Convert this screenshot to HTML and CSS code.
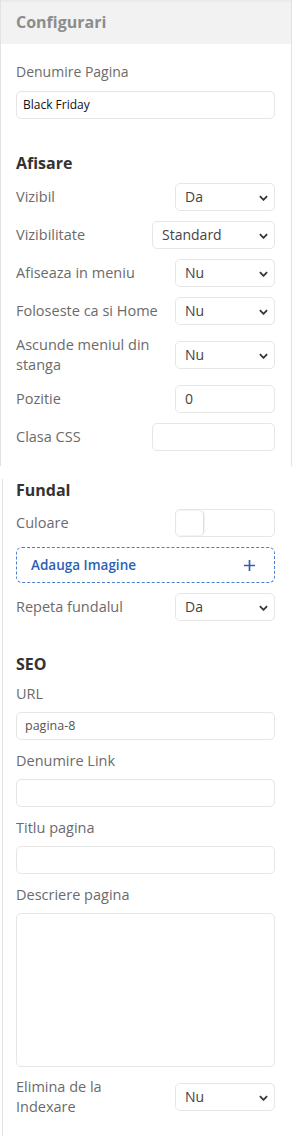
FILE: index.html
```html
<!DOCTYPE html>
<html lang="ro">
<head>
<meta charset="utf-8">
<title>Configurari</title>
<link rel="stylesheet" href="styles.css">
</head>
<body>
<div class="panel panel-top">
  <div class="header">Configurari</div>
  <div class="content">
    <div class="field first">
      <div class="label">Denumire Pagina</div>
      <div class="input dark">Black Friday</div>
    </div>

    <h2 class="heading">Afisare</h2>
    <div class="rows">
      <div class="row">
        <span class="rlabel">Vizibil</span>
        <div class="select">Da<svg class="chev" viewBox="0 0 10 6"><path d="M1 1l4 4 4-4"/></svg></div>
      </div>
      <div class="row">
        <span class="rlabel">Vizibilitate</span>
        <div class="select wide">Standard<svg class="chev" viewBox="0 0 10 6"><path d="M1 1l4 4 4-4"/></svg></div>
      </div>
      <div class="row">
        <span class="rlabel">Afiseaza in meniu</span>
        <div class="select">Nu<svg class="chev" viewBox="0 0 10 6"><path d="M1 1l4 4 4-4"/></svg></div>
      </div>
      <div class="row">
        <span class="rlabel">Foloseste ca si Home</span>
        <div class="select">Nu<svg class="chev" viewBox="0 0 10 6"><path d="M1 1l4 4 4-4"/></svg></div>
      </div>
      <div class="row tall">
        <span class="rlabel two">Ascunde meniul din stanga</span>
        <div class="select">Nu<svg class="chev" viewBox="0 0 10 6"><path d="M1 1l4 4 4-4"/></svg></div>
      </div>
      <div class="row">
        <span class="rlabel">Pozitie</span>
        <div class="select plain">0</div>
      </div>
      <div class="row">
        <span class="rlabel">Clasa CSS</span>
        <div class="select plain wide"></div>
      </div>
    </div>
  </div>
</div>

<div class="panel panel-bottom">
  <div class="content">
    <h2 class="heading top">Fundal</h2>
    <div class="rows">
      <div class="row">
        <span class="rlabel">Culoare</span>
        <div class="select swatch"><span class="knob"></span></div>
      </div>
      <div class="add">
        <span>Adauga Imagine</span>
        <svg class="plus" viewBox="0 0 14 14"><path d="M7 1v12M1 7h12"/></svg>
      </div>
      <div class="row">
        <span class="rlabel">Repeta fundalul</span>
        <div class="select">Da<svg class="chev" viewBox="0 0 10 6"><path d="M1 1l4 4 4-4"/></svg></div>
      </div>
    </div>

    <h2 class="heading seo">SEO</h2>
    <div class="field">
      <div class="label">URL</div>
      <div class="input">pagina-8</div>
    </div>
    <div class="field">
      <div class="label">Denumire Link</div>
      <div class="input"></div>
    </div>
    <div class="field">
      <div class="label">Titlu pagina</div>
      <div class="input"></div>
    </div>
    <div class="field">
      <div class="label">Descriere pagina</div>
      <div class="input textarea"></div>
    </div>
    <div class="row tall last">
      <span class="rlabel two">Elimina de la Indexare</span>
      <div class="select">Nu<svg class="chev" viewBox="0 0 10 6"><path d="M1 1l4 4 4-4"/></svg></div>
    </div>
  </div>
</div>
</body>
</html>
```

FILE: styles.css
```css
* { box-sizing: border-box; }
html, body { margin: 0; padding: 0; background: #fff; }
body {
  width: 293px;
  font-family: "Open Sans", "Noto Sans", sans-serif;
  font-size: 14px;
  color: #6b6b6b;
}
.panel-top {
  width: 292px;
  height: 466px;
  border-left: 1px solid #e2e2e2;
  border-right: 1px solid #e2e2e2;
}
.panel-bottom {
  margin-left: 2px;
  width: 291px;
  height: 670px;
  border-left: 1px solid #e2e2e2;
  padding-bottom: 8px;
}
.header {
  height: 44px;
  line-height: 44px;
  padding-left: 15px;
  background: #f2f2f2;
  box-shadow: inset 0 3px 3px -2px rgba(0,0,0,0.06);
  color: #8c8c8c;
  font-weight: 700;
  font-size: 16px;
}
.panel-top .content { padding: 0 16px 0 15px; }
.panel-bottom .content { padding: 0 18px 0 13px; }
.field { margin-top: 11px; }
.field.first { margin-top: 18px; }
.label {
  line-height: 20px;
  margin-bottom: 8px;
  color: #6b6b6b;
  font-size: 14.5px;
}
.field.first .label { margin-bottom: 9px; font-size: 14px; }
.input {
  height: 28px;
  border: 1px solid #e6e6e6;
  border-radius: 5px;
  padding-left: 8px;
  line-height: 26px;
  font-size: 12.5px;
  color: #555;
}
.input.dark { color: #111; padding-left: 6px; font-size: 12px; }
.input.textarea { height: 154px; }
.heading {
  margin: 33px 0 9px;
  font-size: 16px;
  line-height: 22px;
  font-weight: 700;
  color: #333;
}
.heading.top { margin-top: 13px; margin-bottom: 8px; }
.heading.seo { margin-top: 32px; margin-bottom: 0; }
.heading.seo + .field { margin-top: 9px; }
.rows { display: flex; flex-direction: column; gap: 10px; }
.row {
  display: flex;
  align-items: center;
  justify-content: space-between;
  height: 28px;
}
.row.tall { height: 40px; }
.row.last { margin-top: 10px; }
.rlabel { line-height: 20px; color: #6b6b6b; font-size: 14.5px; }
.rlabel.two { width: 135px; }
.select {
  position: relative;
  width: 100px;
  height: 28px;
  border: 1px solid #e6e6e6;
  border-radius: 5px;
  padding-left: 9px;
  line-height: 26px;
  color: #444;
  font-size: 14px;
  flex-shrink: 0;
}
.select.wide { width: 123px; }
.chev {
  position: absolute;
  right: 6px;
  top: 11px;
  width: 9px;
  height: 6px;
  fill: none;
  stroke: #333;
  stroke-width: 2;
}
.swatch { padding: 0; }
.knob {
  position: absolute;
  left: 1px;
  top: 1px;
  width: 26px;
  height: 24px;
  background: #fff;
  border-radius: 4px;
  box-shadow: 1px 0 2px rgba(0,0,0,0.18);
}
.add {
  display: flex;
  align-items: center;
  justify-content: space-between;
  height: 36px;
  border: 1px dashed #4a7fd0;
  border-radius: 6px;
  padding: 0 18px 0 14px;
  color: #2d5fb5;
  font-weight: 600;
  font-size: 13.5px;
}
.plus {
  width: 13px;
  height: 13px;
  fill: none;
  stroke: #2d5fb5;
  stroke-width: 1.8;
}
```
